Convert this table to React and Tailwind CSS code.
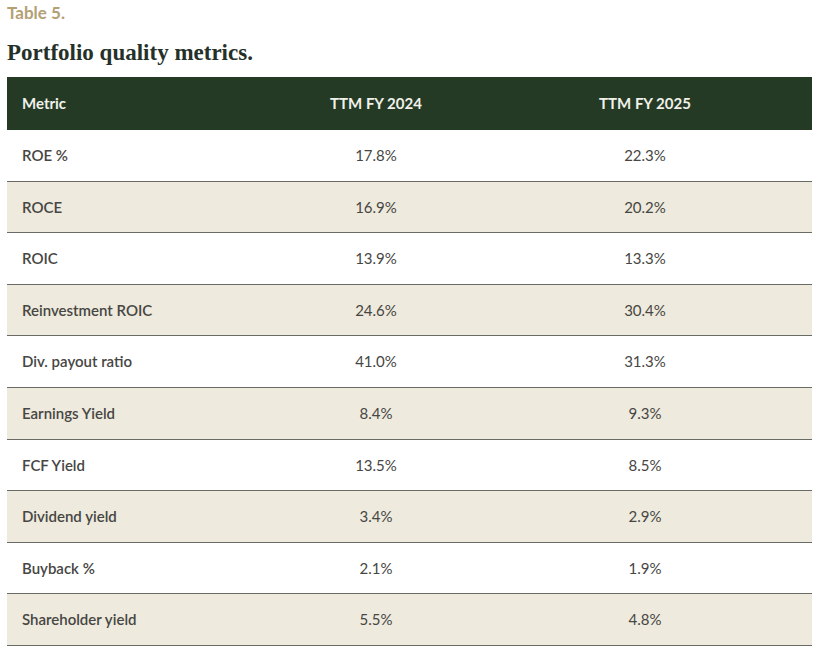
import React from "react";

const rows = [
  ["ROE %", "17.8%", "22.3%"],
  ["ROCE", "16.9%", "20.2%"],
  ["ROIC", "13.9%", "13.3%"],
  ["Reinvestment ROIC", "24.6%", "30.4%"],
  ["Div. payout ratio", "41.0%", "31.3%"],
  ["Earnings Yield", "8.4%", "9.3%"],
  ["FCF Yield", "13.5%", "8.5%"],
  ["Dividend yield", "3.4%", "2.9%"],
  ["Buyback %", "2.1%", "1.9%"],
  ["Shareholder yield", "5.5%", "4.8%"],
];

function App() {
  return (
    <div className="min-h-screen bg-white px-[7px] pt-[3px] font-['Lato',sans-serif]">
      <p className="text-[17px] font-bold text-[#b3a075] leading-[20px]">
        Table 5.
      </p>
      <h2 className="mt-[15px] text-[23px] font-bold text-[#253128] leading-[30px] font-['Liberation_Serif',serif]">
        Portfolio quality metrics.
      </h2>
      <div className="mt-[9px] w-[805px]">
        <div className="grid grid-cols-[234px_270px_268px_1fr] h-[53px] items-center bg-[#243a24] text-[15px] font-bold text-[#f1f1ea]">
          <div className="pl-[15px]">Metric</div>
          <div className="text-center">TTM FY 2024</div>
          <div className="text-center">TTM FY 2025</div>
          <div />
        </div>
        {rows.map((r, i) => (
          <div
            key={r[0]}
            className={
              "grid grid-cols-[234px_270px_268px_1fr] h-[51.6px] items-center border-b border-[#6b6b66] text-[15px] text-[#464643] " +
              (i % 2 === 1 ? "bg-[#eeeadd]" : "bg-white")
            }
          >
            <div className="pl-[15px] font-semibold">{r[0]}</div>
            <div className="text-center">{r[1]}</div>
            <div className="text-center">{r[2]}</div>
            <div />
          </div>
        ))}
      </div>
    </div>
  );
}

export default App;
